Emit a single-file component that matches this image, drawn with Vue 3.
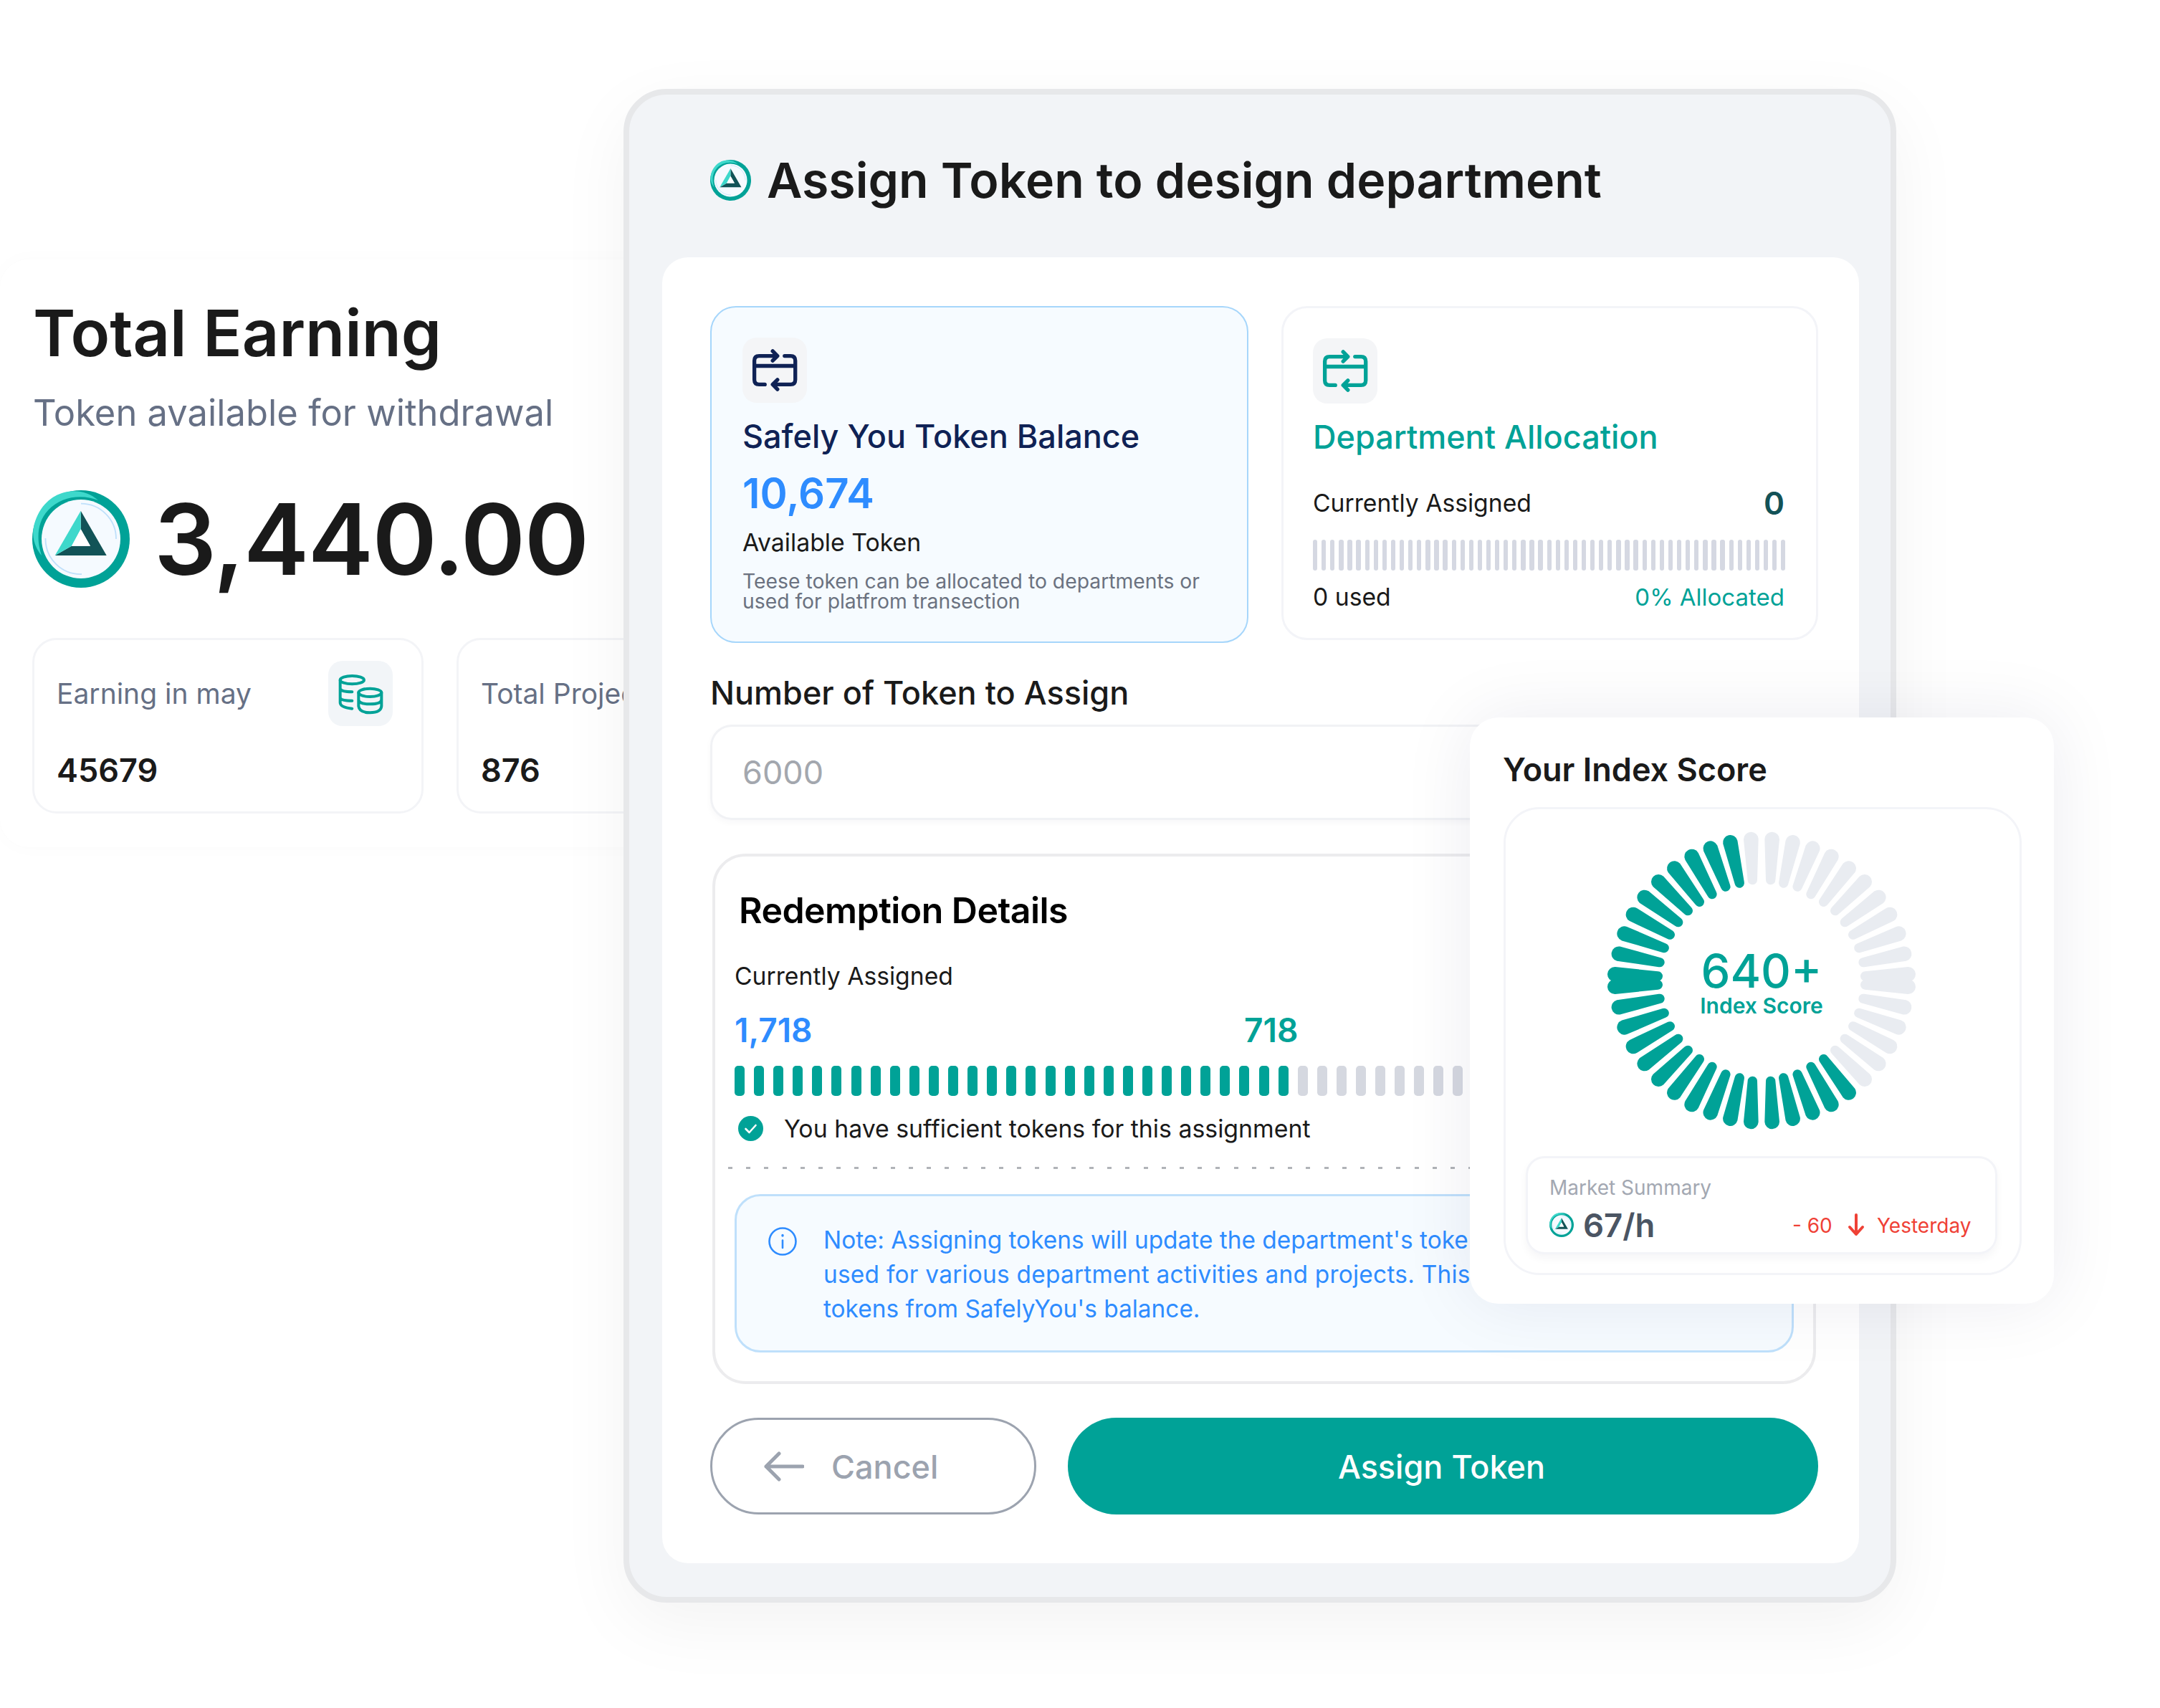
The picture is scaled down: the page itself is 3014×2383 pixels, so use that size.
<script setup>
const tealBarsPts = [
  [640, 63, 646, 233], [553, 75, 592, 247], [470, 100, 534, 262], [392, 135, 477, 293],
  [318, 183, 424, 325], [252, 240, 376, 362], [193, 305, 335, 410], [147, 378, 302, 463],
  [110, 458, 277, 518], [85, 542, 258, 578], [70, 628, 250, 636]
]
const CX = 684, CY = 654, RO = 31, RI = 20
function barPath(ox, oy, ix, iy) {
  const len = Math.hypot(ix - ox, iy - oy)
  const dx = (ix - ox) / len, dy = (iy - oy) / len
  const nx = -dy, ny = dx
  const f = (n) => n.toFixed(1)
  return `M${f(ox + nx * RO)} ${f(oy + ny * RO)}A${RO} ${RO} 0 0 1 ${f(ox - nx * RO)} ${f(oy - ny * RO)}` +
    `L${f(ix - nx * RI)} ${f(iy - ny * RI)}A${RI} ${RI} 0 0 1 ${f(ix + nx * RI)} ${f(iy + ny * RI)}Z`
}
const gaugeBars = []
tealBarsPts.forEach((p, i) => {
  const [ox, oy, ix, iy] = p
  const mx = (v) => 2 * CX - v
  const my = (v) => 2 * CY - v
  gaugeBars.push({ d: barPath(ox, oy, ix, iy), on: i >= 1 })
  gaugeBars.push({ d: barPath(mx(ox), oy, mx(ix), iy), on: false })
  gaugeBars.push({ d: barPath(ox, my(oy), ix, my(iy)), on: true })
  gaugeBars.push({ d: barPath(mx(ox), my(oy), mx(ix), my(iy)), on: i <= 4 })
})
const thinBars = Array.from({ length: 55 })
const redeemBars = Array.from({ length: 54 }, (_, i) => i < 29)
</script>

<template>
  <div class="canvas">
    <svg class="defs" width="0" height="0" aria-hidden="true">
      <symbol id="coin" viewBox="0 0 136 136">
        <circle cx="68" cy="68" r="68" fill="#00a297" />
        <path d="M92 14C70 -6 30 -4 10 30C-4 55 0 75 13 91C6 70 6 45 22 28C40 8 70 5 92 14Z" fill="#3ed8cb" />
        <circle cx="68" cy="68" r="55" fill="#f5faff" />
        <path d="M68 18.7A49 49 0 0 1 117 68M18.5 67A49 49 0 0 0 69 117" fill="none" stroke="#bfe0fb" stroke-width="1.8" />
        <path d="M67.7 28.7L103.7 91H31.7L55 77.7H81L67.7 54.3Z" fill="#125357" />
        <path d="M67.7 28.7L31.7 91L55 77.7L67.7 54.3Z" fill="#3ed8cb" />
        <path d="M67.7 54.3L81 77.7H55Z" fill="#fff" />
      </symbol>
      <symbol id="swap" viewBox="0 15 250 250">
        <path d="M125 80H58Q38 80 38 100V180Q38 200 58 200H82M165 80H190Q210 80 210 100V180Q210 200 190 200H120M38 122H210M115 60L135 80L115 100M135 180L115 200L135 220" fill="none" stroke="currentColor" stroke-width="16" stroke-linecap="round" stroke-linejoin="round" />
      </symbol>
    </svg>

    <section class="earn">
      <h2 class="earn-title">Total Earning</h2>
      <p class="earn-sub">Token available for withdrawal</p>
      <div class="earn-amount">
        <svg class="coin-xl"><use href="#coin" /></svg>
        <span>3,440.00</span>
      </div>
      <div class="earn-cards">
        <div class="mini-card">
          <div class="mini-top">
            <span>Earning in may</span>
            <span class="icon-tile coins">
              <svg viewBox="5 8 270 270" width="90" height="90" fill="none" stroke="#00a297" stroke-width="12" stroke-linecap="round">
                <ellipse cx="105" cy="85" rx="50" ry="17" />
                <path d="M55 85V180Q55 200 105 205M55 122Q60 135 105 135M55 160Q60 172 105 172" />
                <ellipse cx="180" cy="138" rx="48" ry="17" />
                <path d="M132 138V195Q135 222 180 222Q225 222 228 195V138M132 168Q135 186 180 186Q225 186 228 168" />
              </svg>
            </span>
          </div>
          <div class="mini-num">45679</div>
        </div>
        <div class="mini-card">
          <div class="mini-top">
            <span>Total Projects</span>
            <span class="icon-tile"></span>
          </div>
          <div class="mini-num">876</div>
        </div>
      </div>
    </section>

    <section class="panel">
      <header class="panel-head">
        <svg class="coin-md"><use href="#coin" /></svg>
        <h1>Assign Token to design department</h1>
      </header>

      <div class="panel-body">
        <div class="stats">
          <div class="stat stat-blue">
            <span class="icon-tile navy"><svg width="83" height="83"><use href="#swap" /></svg></span>
            <h3 class="stat-title navy-text">Safely You Token Balance</h3>
            <div class="balance">10,674</div>
            <div class="avail">Available Token</div>
            <p class="desc">Teese token can be allocated to departments or used for platfrom transection</p>
          </div>
          <div class="stat stat-plain">
            <span class="icon-tile teal"><svg width="83" height="83"><use href="#swap" /></svg></span>
            <h3 class="stat-title teal-text">Department Allocation</h3>
            <div class="row assigned">
              <span>Currently Assigned</span>
              <strong>0</strong>
            </div>
            <div class="thin-bars">
              <i v-for="(_, i) in thinBars" :key="i"></i>
            </div>
            <div class="row used">
              <span>0 used</span>
              <span class="teal-text">0% Allocated</span>
            </div>
          </div>
        </div>

        <div class="field-label">Number of Token to Assign</div>
        <div class="field">6000</div>

        <div class="redeem">
          <h3 class="redeem-title">Redemption Details</h3>
          <div class="redeem-label">Currently Assigned</div>
          <div class="redeem-values">
            <span class="v-blue">1,718</span>
            <span class="v-teal">718</span>
          </div>
          <div class="redeem-bars">
            <i v-for="(on, i) in redeemBars" :key="i" :class="{ on }"></i>
          </div>
          <div class="ok">
            <svg width="35" height="35" viewBox="0 0 35 35">
              <circle cx="17.5" cy="17.5" r="17.5" fill="#00a297" />
              <path d="M10.5 18L15.5 23L24.5 13" fill="none" stroke="#fff" stroke-width="2.6" stroke-linecap="round" stroke-linejoin="round" />
            </svg>
            <span>You have sufficient tokens for this assignment</span>
          </div>
          <div class="dots"></div>
          <div class="note">
            <svg class="note-icon" width="40" height="40" viewBox="0 0 40 40" fill="none" stroke="#2e8cff" stroke-width="2.6" stroke-linecap="round">
              <circle cx="20" cy="20" r="18.5" />
              <path d="M20 18.5V29" />
              <path d="M20 11.5V12" stroke-width="3.4" />
            </svg>
            <p>Note: Assigning tokens will update the department's token<br /><span class="note-wide">used for various department activities and projects. This</span><br />tokens from SafelyYou's balance.</p>
          </div>
        </div>

        <div class="actions">
          <button class="btn-cancel" type="button">
            <svg width="56" height="42" viewBox="0 0 56 42" fill="none" stroke="#9ca3af" stroke-width="5" stroke-linecap="round" stroke-linejoin="round">
              <path d="M54 21H3M21 3L3 21L21 39" />
            </svg>
            <span>Cancel</span>
          </button>
          <button class="btn-assign" type="button">Assign Token</button>
        </div>
      </div>
    </section>

    <section class="score">
      <h3 class="score-title">Your Index Score</h3>
      <div class="score-inner">
        <div class="gauge">
          <svg width="456" height="436" viewBox="0 0 1368 1308">
            <path v-for="(b, i) in gaugeBars" :key="i" :d="b.d" :fill="b.on ? '#00a297' : '#e9ecf1'" />
          </svg>
          <div class="gauge-text">
            <div class="g-num">640+</div>
            <div class="g-label">Index Score</div>
          </div>
        </div>
        <div class="market">
          <div class="market-label">Market Summary</div>
          <div class="market-row">
            <svg class="coin-sm"><use href="#coin" /></svg>
            <span class="rate">67/h</span>
            <span class="delta">- 60</span>
            <svg class="down" width="24" height="32" viewBox="0 0 24 32" fill="none" stroke="#ef4136" stroke-width="4" stroke-linecap="round" stroke-linejoin="round">
              <path d="M12 2V29M3 19L12 29L21 19" />
            </svg>
            <span class="yest">Yesterday</span>
          </div>
        </div>
      </div>
    </section>
  </div>
</template>

<style>
html, body { margin: 0; background: #fff; }
</style>

<style scoped>
* { box-sizing: border-box; }
h1, h2, h3, p { margin: 0; font-weight: inherit; }
.canvas {
  position: relative;
  width: 3014px;
  height: 2383px;
  overflow: hidden;
  background: #fff;
  font-family: Inter, "Noto Sans", sans-serif;
  color: #1a1a1a;
}
.defs { position: absolute; }

/* left card */
.earn {
  position: absolute;
  left: 0;
  top: 362px;
  width: 1240px;
  height: 820px;
  padding: 53px 0 0 46px;
  background: #fff;
  border-radius: 40px;
  box-shadow: 0 0 30px rgba(20, 30, 60, 0.02);
}
.earn-title { font-size: 90px; line-height: 100px; font-weight: 600; }
.earn-sub { margin-top: 31px; font-size: 50.7px; line-height: 60px; color: #667085; white-space: nowrap; }
.earn-amount { display: flex; align-items: center; gap: 34px; margin-top: 78px; margin-left: -1px; height: 136px; font-size: 137px; line-height: 136px; font-weight: 600; letter-spacing: -1.5px; }
.coin-xl { width: 136px; height: 136px; flex: none; }
.earn-cards { display: flex; gap: 46px; margin: 70px 0 0 -1px; }
.mini-card { flex: none; width: 546px; height: 245px; padding: 29px 40px 0 31px; border: 3px solid #f3f4f7; border-radius: 34px; }
.mini-top { display: flex; align-items: center; justify-content: space-between; font-size: 39px; line-height: 50px; color: #667085; white-space: nowrap; }
.mini-num { margin-top: 37px; font-size: 45px; line-height: 50px; font-weight: 600; }
.icon-tile { display: flex; align-items: center; justify-content: center; flex: none; width: 90px; height: 91px; border-radius: 20px; background: #f4f5f7; }
.icon-tile.coins { background: #f2f5f8; }
.navy { color: #0f2255; }
.teal { color: #00a297; }
.navy-text { color: #0f2255; }
.teal-text { color: #00a297; }

/* main panel */
.panel {
  position: absolute;
  left: 870px;
  top: 124px;
  width: 1776px;
  height: 2112px;
  padding: 91px 44px 0 46px;
  background: #f2f4f7;
  border: 8px solid #e7e8ea;
  border-radius: 60px;
  box-shadow: 0 30px 100px rgba(0, 0, 0, 0.05);
}
.panel-head { display: flex; align-items: center; gap: 22px; height: 56px; padding-left: 67px; }
.coin-md { width: 57px; height: 57px; flex: none; }
.panel-head h1 { font-size: 68px; line-height: 56px; font-weight: 600; white-space: nowrap; }
.panel-body { margin-top: 80px; height: 1822px; padding: 68px 56px 0 67px; background: #fff; border-radius: 36px; }
.stats { display: grid; grid-template-columns: 751px 749px; column-gap: 46px; align-items: start; }
.stat { border-radius: 36px; }
.stat-blue { height: 470px; padding: 42px 30px 0 43px; background: #f6fbff; border: 2px solid #a6d6fb; }
.stat-plain { height: 466px; padding: 42px 42px 0 41px; border: 3px solid #f3f4f8; }
.stat-title { margin-top: 19px; font-size: 45px; line-height: 56px; font-weight: 500; white-space: nowrap; }
.balance { margin-top: 16px; font-size: 58px; line-height: 70px; font-weight: 600; color: #2e8cff; }
.avail { margin-top: 12px; font-size: 33.8px; line-height: 44px; color: #1a1a1a; }
.desc { margin-top: 18px; font-size: 28.3px; line-height: 28px; color: #6b7280; }
.row { display: flex; align-items: center; justify-content: space-between; font-size: 33.7px; line-height: 44px; }
.assigned { margin-top: 42px; }
.assigned strong { margin-right: 2px; font-size: 44px; font-weight: 600; color: #135257; }
.thin-bars { display: flex; justify-content: space-between; margin-top: 29px; height: 43px; }
.thin-bars i { width: 6.3px; border-radius: 3px; background: #d5d8e2; }
.used { margin-top: 15px; }
.used .teal-text { margin-right: 2px; font-size: 33px; }

.field-label { margin-top: 42px; font-size: 45px; line-height: 56px; font-weight: 500; white-space: nowrap; }
.field { display: flex; align-items: center; margin-top: 16px; width: 1546px; height: 133px; padding-left: 42px; font-size: 45px; color: #a3a7ae; border: 3px solid #f1f2f5; border-radius: 30px; box-shadow: 0 4px 10px rgba(20, 30, 60, 0.03); }

.redeem { margin: 47px 0 0 3px; width: 1540px; height: 740px; padding: 45px 27px 0; border: 4px solid #ececee; border-radius: 46px; overflow: hidden; }
.redeem-title { margin-left: 6px; font-size: 50px; line-height: 60px; font-weight: 600; color: #000; letter-spacing: -0.55px; white-space: nowrap; }
.redeem-label { margin-top: 40px; font-size: 33.7px; line-height: 44px; }
.redeem-values { display: flex; margin-top: 25px; font-size: 46px; line-height: 56px; font-weight: 600; }
.v-blue { width: 711px; color: #2e8cff; }
.v-teal { color: #00a297; }
.redeem-bars { display: flex; gap: 13.1px; margin-top: 22px; height: 42px; }
.redeem-bars i { flex: none; width: 14px; border-radius: 5px; background: #d5d8e0; }
.redeem-bars i.on { background: #00a297; }
.ok { display: flex; align-items: center; gap: 29px; margin-top: 28px; padding-left: 5px; height: 35px; font-size: 33.85px; white-space: nowrap; }
.dots { margin: 36px 0 0 -9px; height: 3px; width: 1480px; background: repeating-linear-gradient(90deg, #b0b3b8 0 6px, transparent 6px 25.2px); }
.note { display: flex; align-items: flex-start; gap: 37px; margin: 35px 0 0; width: 1478px; height: 221px; padding: 37px 0 0 44px; background: #f6fbff; border: 3px solid #bfe0fb; border-radius: 36px; overflow: hidden; }
.note-icon { flex: none; margin-top: 6px; }
.note p { font-size: 33.4px; line-height: 48px; color: #2e8cff; white-space: nowrap; }
.note-wide { letter-spacing: 0.25px; }

.actions { display: flex; gap: 44px; margin: 47px 0 0; }
.actions button { height: 135px; border-radius: 68px; font-family: inherit; font-size: 45px; font-weight: 500; cursor: pointer; }
.btn-cancel { display: flex; align-items: center; gap: 38px; flex: none; width: 455px; padding: 0 0 0 72px; background: #fff; color: #9ca3af; border: 3px solid #9ca3af; }
.btn-cancel span { padding-top: 2px; }
.btn-assign { flex: none; width: 1047px; padding: 2px 4px 0 0; background: #00a297; color: #fff; border: 0; }

/* score card */
.score {
  position: absolute;
  left: 2051px;
  top: 1001px;
  width: 815px;
  height: 818px;
  padding: 45px 46px 0;
  background: #fff;
  border-radius: 40px;
  box-shadow: 0 0 100px rgba(20, 30, 80, 0.08);
}
.score-title { font-size: 45px; line-height: 56px; font-weight: 600; white-space: nowrap; }
.score-inner { margin: 24px 0 0 1px; width: 723px; height: 653px; padding: 21px 0 0; border: 3px solid #f3f4f8; border-radius: 50px; }
.gauge { position: relative; width: 456px; height: 436px; margin-left: 129px; }
.gauge svg { display: block; }
.gauge-text { position: absolute; inset: 0; display: flex; flex-direction: column; align-items: center; padding-top: 175px; color: #00a297; }
.g-num { font-size: 65px; line-height: 60px; font-weight: 500; }
.g-label { font-size: 30px; line-height: 36px; font-weight: 600; white-space: nowrap; }
.market { margin: 27px 0 0 28px; width: 658px; height: 137px; padding: 23px 0 0 30px; border: 3px solid #f3f4f8; border-radius: 26px; box-shadow: 0 6px 12px rgba(20, 30, 60, 0.04); }
.market-label { font-size: 28px; line-height: 36px; color: #a3a8b2; white-space: nowrap; }
.market-row { display: flex; align-items: center; margin-top: 16px; height: 36px; }
.coin-sm { width: 34px; height: 34px; flex: none; }
.rate { flex: none; margin-left: 13px; width: 292px; font-size: 45.5px; font-weight: 600; color: #4b5563; }
.delta { flex: none; width: 77px; margin-top: 2px; font-size: 28px; color: #ef4136; }
.down { flex: none; width: 24px; }
.yest { flex: none; margin: 2px 0 0 17px; font-size: 28px; color: #ef4136; }
</style>
